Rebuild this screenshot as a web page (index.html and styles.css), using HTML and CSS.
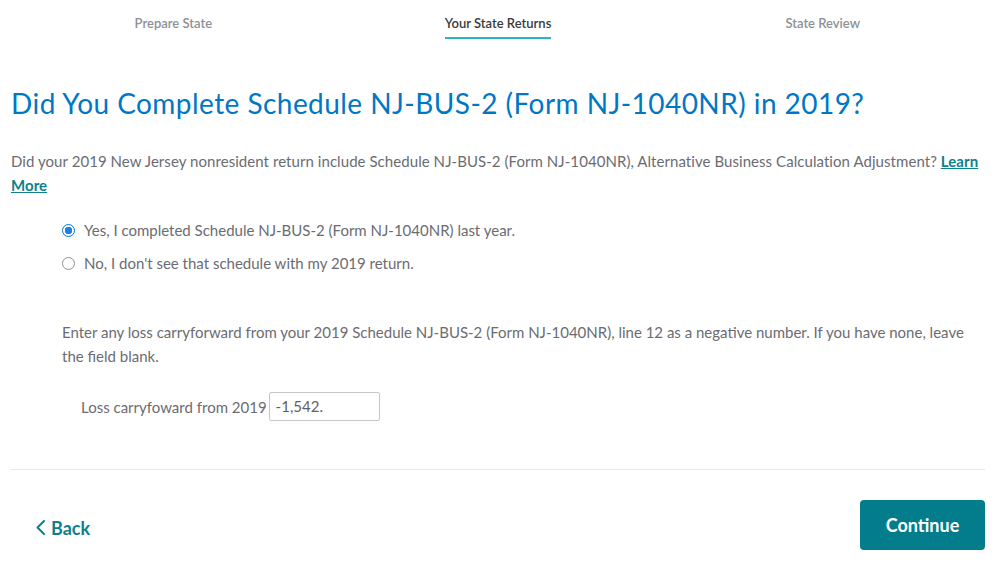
FILE: index.html
```html
<!DOCTYPE html>
<html lang="en">
<head>
<meta charset="utf-8">
<title>State Returns</title>
<link rel="stylesheet" href="styles.css">
</head>
<body>
<div class="page">
  <nav class="steps">
    <div class="step"><span class="step-label">Prepare State</span></div>
    <div class="step active"><span class="step-label">Your State Returns</span></div>
    <div class="step"><span class="step-label">State Review</span></div>
  </nav>

  <h1 class="title">Did You Complete Schedule NJ-BUS-2 (Form NJ-1040NR) in 2019?</h1>

  <p class="intro">Did your 2019 New Jersey nonresident return include Schedule NJ-BUS-2 (Form NJ-1040NR), Alternative Business Calculation Adjustment? <a href="#" class="link">Learn More</a></p>

  <div class="options">
    <label class="option"><span class="radio checked"></span><span>Yes, I completed Schedule NJ-BUS-2 (Form NJ-1040NR) last year.</span></label>
    <label class="option"><span class="radio"></span><span>No, I don't see that schedule with my 2019 return.</span></label>
  </div>

  <p class="detail">Enter any loss carryforward from your 2019 Schedule NJ-BUS-2 (Form NJ-1040NR), line 12 as a negative number. If you have none, leave the field blank.</p>

  <div class="field">
    <span class="field-label">Loss carryfoward from 2019</span>
    <span class="field-input">-1,542.</span>
  </div>

  <hr class="divider">

  <div class="footer">
    <a href="#" class="back"><svg width="11" height="17" viewBox="0 0 11 17"><path d="M9 2 L2.5 8.5 L9 15" fill="none" stroke="#0d7f8d" stroke-width="2" stroke-linecap="round" stroke-linejoin="round"/></svg>Back</a>
    <button class="continue">Continue</button>
  </div>
</div>
</body>
</html>
```
FILE: styles.css
```css
* { box-sizing: border-box; }
body {
  margin: 0;
  background: #fff;
  font-family: Lato, "Open Sans", sans-serif;
  color: #6b6c72;
}
.page {
  padding: 0 14px 0 11px;
}
.steps {
  display: flex;
  height: 40px;
  align-items: flex-start;
  padding-top: 15px;
}
.step {
  flex: 1;
  text-align: center;
  font-size: 13px;
  font-weight: 600;
  color: #8d9096;
}
.step-label {
  display: inline-block;
  padding-bottom: 5px;
  line-height: 17px;
  border-bottom: 2px solid transparent;
}
.step.active { color: #393a3d; }
.step.active .step-label { border-bottom-color: #2ab5c4; }
.title {
  margin: 46px 0 0;
  font-size: 28px;
  font-weight: 400;
  line-height: 34px;
  letter-spacing: 0.45px;
  color: #0077c5;
}
.intro {
  margin: 29px 0 0;
  font-size: 15px;
  line-height: 24px;
  letter-spacing: 0.06px;
  color: #6b6c72;
}
.link {
  color: #0d7f8d;
  font-weight: 700;
  text-decoration: underline;
}
.options {
  margin-top: 21px;
  padding-left: 51px;
  display: flex;
  flex-direction: column;
  gap: 9px;
}
.option {
  display: flex;
  align-items: center;
  gap: 9px;
  font-size: 15px;
  line-height: 24px;
}
.radio {
  width: 13px;
  height: 13px;
  border-radius: 50%;
  border: 1px solid #8d9096;
  flex: none;
}
.radio.checked {
  border: 1.5px solid #0077c5;
  background: radial-gradient(circle, #1f7fe5 0 3.5px, #fff 4px);
}
.detail {
  margin: 45px 0 0 51px;
  font-size: 15px;
  line-height: 24px;
}
.field {
  margin: 24px 0 0 70px;
  display: flex;
  align-items: center;
  gap: 2px;
  font-size: 15px;
}
.field-input {
  width: 111px;
  height: 29px;
  border: 1px solid #c5c7cb;
  border-radius: 2px;
  padding: 0 6px;
  line-height: 27px;
  color: #5f6065;
}
.divider {
  margin: 48px 0 0;
  border: 0;
  border-top: 1px solid #e6e7e9;
}
.footer {
  display: flex;
  justify-content: space-between;
  align-items: center;
  margin-top: 30px;
  padding-left: 24px;
}
.back {
  display: flex;
  align-items: center;
  gap: 5px;
  color: #0d7f8d;
  font-size: 18px;
  font-weight: 700;
  text-decoration: none;
  margin-top: 5px;
}
.continue {
  width: 125px;
  height: 50px;
  border: 0;
  border-radius: 4px;
  background: #037c8c;
  color: #fff;
  font-family: Lato, "Open Sans", sans-serif;
  font-size: 18px;
  font-weight: 700;
}
```
